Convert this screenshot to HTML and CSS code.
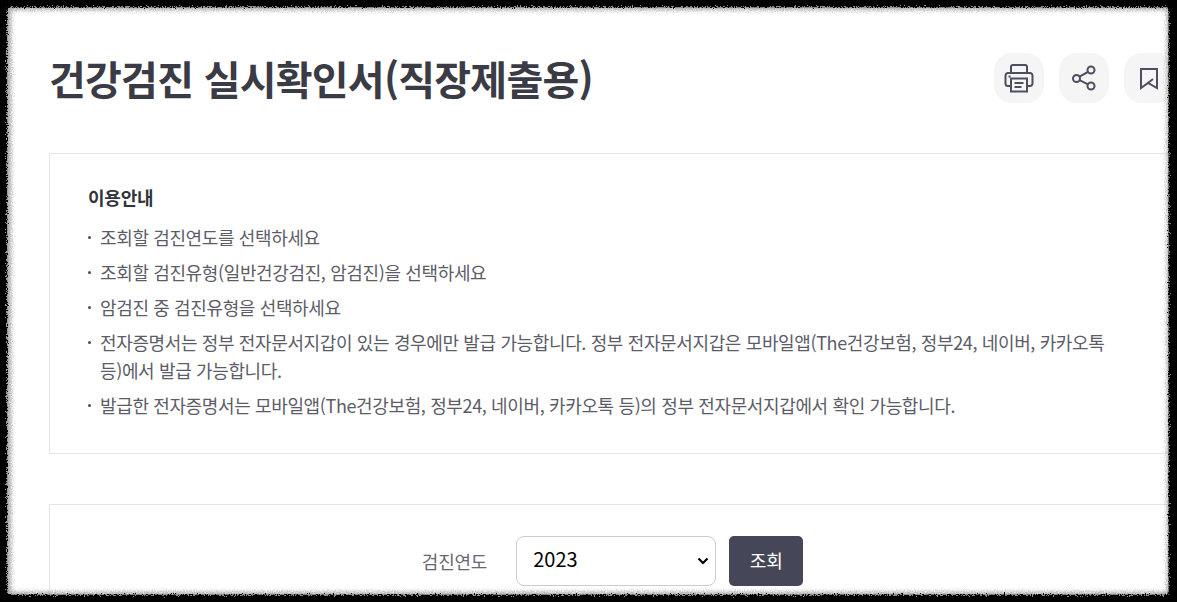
FILE: index.html
```html
<!DOCTYPE html>
<html lang="ko">
<head>
    <meta charset="UTF-8">
    <meta name="viewport" content="width=device-width, initial-scale=1.0">
    <title>건강검진 실시확인서(직장제출용)</title>
    <link rel="stylesheet" href="styles.css">
</head>
<body>
    <div class="panel">
        <div class="content">
            <div class="head">
                <h1>건강검진 실시확인서(직장제출용)</h1>
                <div class="tools">
                    <button class="tool" aria-label="인쇄">
                        <svg width="30" height="30" viewBox="0 0 30 30" fill="none" stroke="#4d4e5f" stroke-width="2">
                            <path d="M7 10V4a2 2 0 0 1 2-2h12a2 2 0 0 1 2 2v6"/>
                            <path d="M7 23H4a2.500 2.500 0 0 1-2.500-2.500V12.500A2.500 2.500 0 0 1 4 10h22a2.500 2.500 0 0 1 2.500 2.500v8A2.500 2.500 0 0 1 26 23h-3"/>
                            <rect x="7" y="15.500" width="16" height="13"/>
                            <path d="M10.500 20h9M10.500 24h7M4.500 13.500h2"/>
                        </svg>
                    </button>
                    <button class="tool" aria-label="공유">
                        <svg width="30" height="30" viewBox="0 0 30 30" fill="none" stroke="#4d4e5f" stroke-width="2">
                            <circle cx="22" cy="7" r="3.500"/>
                            <circle cx="7.500" cy="15.500" r="3.500"/>
                            <circle cx="22" cy="23" r="3.500"/>
                            <path d="M10.500 13.700 19 8.800M10.500 17.200l8.500 4.100"/>
                        </svg>
                    </button>
                    <button class="tool" aria-label="즐겨찾기">
                        <svg width="30" height="30" viewBox="0 0 30 30" fill="none" stroke="#4d4e5f" stroke-width="2">
                            <path d="M7 6h16v19l-9-5-7 5zM14 20l5-4"/>
                        </svg>
                    </button>
                </div>
            </div>

            <div class="guide">
                <h2>이용안내</h2>
                <ul>
                    <li>조회할 검진연도를 선택하세요</li>
                    <li>조회할 검진유형(일반건강검진, 암검진)을 선택하세요</li>
                    <li>암검진 중 검진유형을 선택하세요</li>
                    <li>전자증명서는 정부 전자문서지갑이 있는 경우에만 발급 가능합니다. 정부 전자문서지갑은 모바일앱(The건강보험, 정부24, 네이버, 카카오톡 <span class="nowrap">등)에서</span> 발급 가능합니다.</li>
                    <li>발급한 전자증명서는 모바일앱(The건강보험, 정부24, 네이버, 카카오톡 등)의 정부 전자문서지갑에서 확인 가능합니다.</li>
                </ul>
            </div>

            <div class="search">
                <label for="year">검진연도</label>
                <select id="year">
                    <option>2023</option>
                </select>
                <button class="submit">조회</button>
            </div>
        </div>
    </div>
    <div class="edge"></div>
    <svg class="defs" width="0" height="0">
        <filter id="rough" x="0" y="0" width="100%" height="100%">
            <feTurbulence type="fractalNoise" baseFrequency="0.9" numOctaves="2" seed="4"/>
            <feDisplacementMap in="SourceGraphic" scale="7" xChannelSelector="R" yChannelSelector="G"/>
        </filter>
    </svg>
</body>
</html>
```

FILE: styles.css
```css
html, body { height: 100%; }
body { margin: 0; padding: 8px 9px 8px 8px; box-sizing: border-box; background: #000; overflow: hidden; font-family: "Noto Sans CJK KR", "Noto Sans", sans-serif; }
.panel { height: 100%; background: #fff; overflow: hidden; }
.content { width: 1125px; margin-left: 41px; }

/* black frame with the torn grey edge */
.edge { position: absolute; top: 0; left: 0; right: 0; bottom: 0; box-sizing: border-box; border-style: solid; border-color: #000; border-width: 7px 8px 7px 7px; border-radius: 12px; box-shadow: inset 1px 0 4px 3px #a8a8a8; filter: url(#rough); pointer-events: none; }
.defs { position: absolute; }

.head { display: flex; justify-content: space-between; align-items: center; padding-top: 45px; height: 50px; margin-bottom: 50px; }
h1 { margin: 0; font-size: 40px; font-weight: 700; color: #3b3b46; letter-spacing: -0.75px; }
.tools { display: flex; gap: 15px; }
.tool { width: 50px; height: 50px; padding: 0; border: 0; border-radius: 18px; background: #f5f5f6; display: flex; align-items: center; justify-content: center; }

.guide { border: 1px solid #e5e5e5; padding: 30px 38px 30px; height: 239px; }
.guide h2 { margin: 0 0 12px; font-size: 18px; line-height: 27px; font-weight: 700; color: #33333d; letter-spacing: -0.2px; }
.guide ul { margin: 0; padding: 0; list-style: none; }
.guide li { position: relative; padding-left: 12px; margin-bottom: 7px; font-size: 18px; line-height: 28px; color: #5c5c68; letter-spacing: -0.37px; word-break: keep-all; }
.guide li::before { content: ""; position: absolute; left: 0; top: 13px; width: 3px; height: 3px; border-radius: 50%; background: #4a4a55; }
.nowrap { white-space: nowrap; }

.search { margin-top: 50px; border: 1px solid #e5e5e5; padding: 31px 0 40px 2px; display: flex; justify-content: center; align-items: center; }
.search label { font-size: 18px; color: #666670; margin-right: 29px; letter-spacing: -0.2px; }
.search select { width: 200px; height: 50px; padding: 0 16px 6px; border: 1px solid #ccc; border-radius: 8px; font-family: inherit; font-size: 20px; color: #000; margin-right: 13px; appearance: none; background: #fff url("data:image/svg+xml,%3Csvg xmlns='http://www.w3.org/2000/svg' width='12' height='8'%3E%3Cpath d='M1.500 1.500 6 6l4.500-4.500' fill='none' stroke='%23000' stroke-width='2.200'/%3E%3C/svg%3E") no-repeat right 6px center; }
.submit { width: 74px; height: 50px; padding: 0 0 2px; border: 0; border-radius: 5px; background: #454759; color: #fff; font-family: inherit; font-size: 18px; }
```
